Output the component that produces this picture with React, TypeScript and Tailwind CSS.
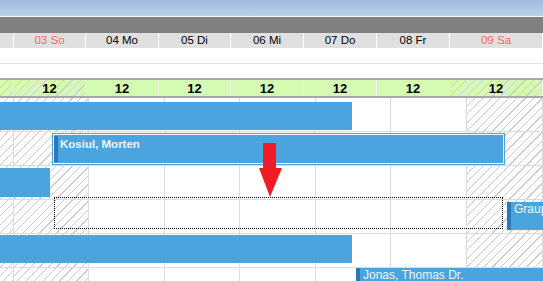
import React from "react";

const HATCH =
  "bg-[repeating-linear-gradient(135deg,transparent_0px,transparent_5px,#cdcdcd_5px,#cdcdcd_6px)]";

const headerCols = [
  { w: 14, label: "", weekend: false },
  { w: 72, label: "03 So", weekend: true },
  { w: 73, label: "04 Mo", weekend: false },
  { w: 72, label: "05 Di", weekend: false },
  { w: 73, label: "06 Mi", weekend: false },
  { w: 73, label: "07 Do", weekend: false },
  { w: 73, label: "08 Fr", weekend: false },
  { w: 93, label: "09 Sa", weekend: true },
];

const bodyCols = [
  { w: 14, hatch: true },
  { w: 75, hatch: true },
  { w: 76, hatch: false },
  { w: 75, hatch: false },
  { w: 76, hatch: false },
  { w: 75, hatch: false },
  { w: 76, hatch: false },
  { w: 76, hatch: true },
];

function GridRow({ children }: { children?: React.ReactNode }) {
  return (
    <div className="relative h-[34px] flex border-b border-[#dcdcdc]">
      {bodyCols.map((c, i) => (
        <div
          key={i}
          style={{ width: c.w }}
          className={`shrink-0 h-full border-r border-[#dcdcdc] ${c.hatch ? HATCH : "bg-white"}`}
        />
      ))}
      {children}
    </div>
  );
}

function Booking({
  left,
  width,
  top,
  height,
  label,
}: {
  left: number;
  width: number;
  top: number;
  height: number;
  label: string;
}) {
  return (
    <div
      className="absolute flex bg-[#4ca4de] overflow-hidden"
      style={{ left, width, top, height }}
    >
      <div className="w-[4px] shrink-0 bg-[#2a78b4]" />
      <span className="pl-[3px] pt-[1px] text-[12px] leading-[13px] text-[#eef7ff] whitespace-nowrap">
        {label}
      </span>
    </div>
  );
}

export default function App() {
  return (
    <div className="w-[543px] h-[281px] overflow-hidden bg-white font-['Liberation_Sans',Arial,sans-serif] select-none">
      {/* window title gradient */}
      <div className="h-[16px] bg-[linear-gradient(180deg,#9fbbdb,#bbd2eb)]" />
      <div className="h-[1px] bg-[#f4f8fc]" />
      <div className="h-[16px] bg-[#808080]" />

      {/* day header */}
      <div className="flex h-[15px] bg-[#e0e0e0]">
        {headerCols.map((c, i) => (
          <div
            key={i}
            style={{ width: c.w }}
            className={`shrink-0 flex items-center justify-center text-[11.5px] leading-none border-r border-white ${c.weekend ? "text-[#f66]" : "text-black"}`}
          >
            {c.label}
          </div>
        ))}
      </div>

      <div className="h-[16px] bg-white border-b border-[#e2e2e2]" />
      <div className="h-[16px] bg-white border-b-2 border-[#a8a8a8]" />

      {/* capacity row */}
      <div className="flex h-[18px] bg-[#d5fab1] border-b-2 border-[#a8a8a8]">
        {headerCols.map((c, i) => (
          <div
            key={i}
            style={{ width: c.w }}
            className={`shrink-0 flex items-center justify-center text-[13px] font-bold leading-none text-black border-r border-[#f2f2f2] ${i < 2 || i === 7 ? HATCH + " bg-[#d5fab1]" : ""}`}
          >
            {i > 0 ? "12" : ""}
          </div>
        ))}
      </div>

      {/* booking rows */}
      <div className="relative">
        <GridRow>
          <div className="absolute left-0 top-[4px] w-[352px] h-[28px] bg-[#4ca4de]" />
        </GridRow>
        <GridRow>
          <div className="absolute left-[52px] top-[1px] w-[453px] h-[32px] border border-[#4ca4de] p-[1px] bg-white">
            <div className="h-full flex bg-[#4ca4de]">
              <div className="w-[4px] shrink-0 my-[1px] bg-[#2a78b4]" />
              <span className="pl-[2px] pt-[2px] text-[11.5px] leading-[14px] font-bold text-[#eef7ff]">
                Kosiul, Morten
              </span>
            </div>
          </div>
        </GridRow>
        <GridRow>
          <div className="absolute left-0 top-[2px] w-[50px] h-[29px] bg-[#4ca4de]" />
        </GridRow>
        <GridRow>
          <Booking left={507} width={40} top={2} height={28} label="Graup" />
        </GridRow>
        <GridRow>
          <div className="absolute left-0 top-[1px] w-[352px] h-[28px] bg-[#4ca4de]" />
        </GridRow>
        <GridRow>
          <Booking left={356} width={200} top={0} height={28} label="Jonas, Thomas Dr." />
        </GridRow>

        {/* drop target */}
        <div className="absolute left-[54px] top-[99px] w-[449px] h-[32px] border border-dotted border-black" />

        {/* drag arrow */}
        <svg
          className="absolute left-[258px] top-[45px]"
          width="25"
          height="55"
          viewBox="0 0 25 55"
        >
          <path d="M5 0 H18 V25 H24 L12 54 L1 25 H5 Z" fill="#ee1c24" />
        </svg>
      </div>
    </div>
  );
}
